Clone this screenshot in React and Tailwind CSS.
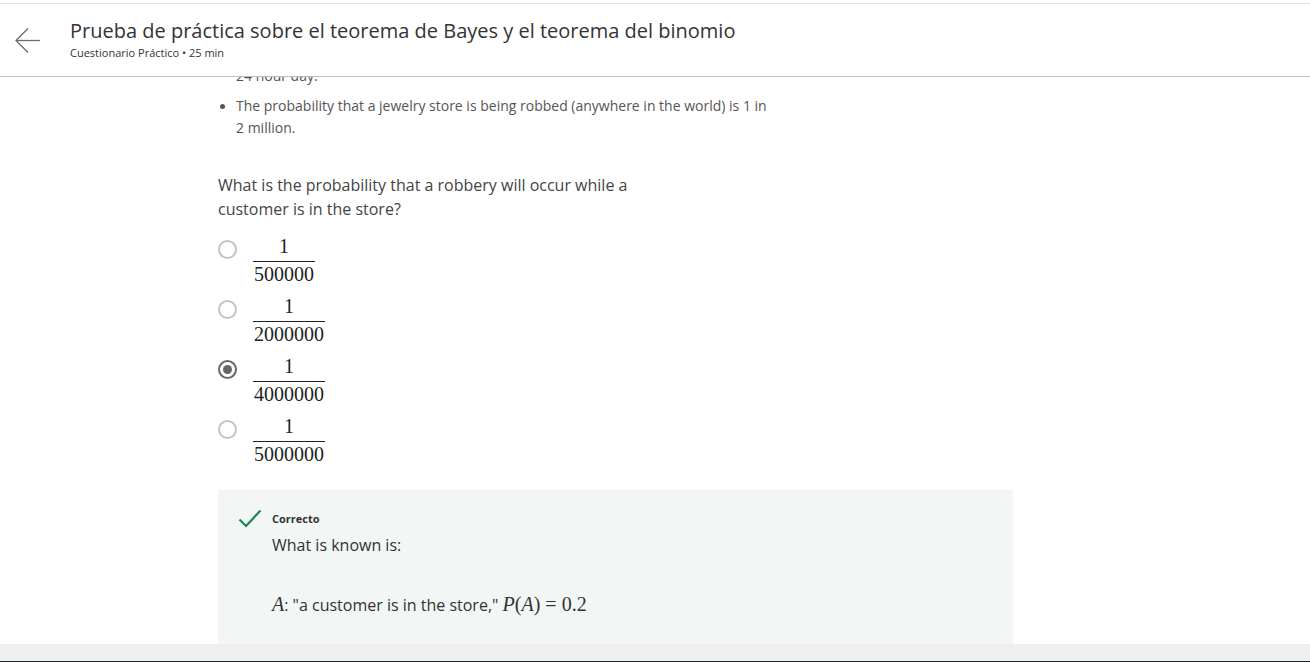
const options = [
  { den: "500000", checked: false },
  { den: "2000000", checked: false },
  { den: "4000000", checked: true },
  { den: "5000000", checked: false },
];

const serif = { fontFamily: '"Liberation Serif", "DejaVu Serif", serif' };

const Radio = ({ checked }) => (
  <div
    className={
      "mt-[4px] w-[19px] h-[19px] rounded-full border-2 flex items-center justify-center shrink-0 " +
      (checked ? "border-[#666]" : "border-[#c4c4c4]")
    }
  >
    {checked && <div className="w-[9px] h-[9px] rounded-full bg-[#666]" />}
  </div>
);

const Fraction = ({ num, den }) => (
  <div className="flex flex-col items-center text-[20px] text-[#222]" style={serif}>
    <div className="h-[20px] leading-[20px] px-[1px]">{num}</div>
    <div className="w-full mt-[5px] border-t-[1.5px] border-[#222]" />
    <div className="h-[20px] leading-[20px] px-[1px] mt-[2px]">{den}</div>
  </div>
);

export default function App() {
  return (
    <div
      className="w-[1310px] h-[662px] bg-white flex flex-col overflow-hidden"
      style={{ fontFamily: '"Open Sans", "Liberation Sans", sans-serif' }}
    >
      <div className="h-[3px] shrink-0" />
      {/* header */}
      <div className="h-[74px] shrink-0 border-t border-b border-t-[#e2e2e2] border-b-[#bdbdbd] flex items-start relative z-10 bg-white">
        <button className="ml-[14px] mt-[22px] w-[28px] h-[28px] flex items-center justify-center">
          <svg width="28" height="28" viewBox="0 0 28 28" fill="none" stroke="#6b6b6b" strokeWidth="1.3">
            <path d="M2 14.5 H26" />
            <path d="M14 2.5 L2 14.5 L14 26.5" />
          </svg>
        </button>
        <div className="ml-[28px] mt-[14px]">
          <h1 className="text-[20px] leading-[26px] text-[#333]">
            Prueba de práctica sobre el teorema de Bayes y el teorema del binomio
          </h1>
          <p className="text-[11px] leading-[16px] mt-[1px] text-[#333]">
            Cuestionario Práctico • 25 min
          </p>
        </div>
      </div>

      {/* scrolled content */}
      <div className="flex-1 overflow-hidden">
        <div className="ml-[218px] mt-[-12px]">
          <ul className="text-[14px] leading-[22px] text-[#555]">
            <li className="pl-[18px]">24 hour day.</li>
            <li className="mt-[8px] flex">
              <span className="w-[18px] shrink-0 flex pt-[9px] pl-[2px]">
                <span className="w-[5px] h-[5px] rounded-full bg-[#555]" />
              </span>
              <span className="whitespace-nowrap">
                The probability that a jewelry store is being robbed (anywhere in the world) is 1 in
                <br />2 million.
              </span>
            </li>
          </ul>

          <p className="mt-[34px] text-[16px] leading-[24px] text-[#444] whitespace-nowrap">
            What is the probability that a robbery will occur while a
            <br />
            customer is in the store?
          </p>

          <div className="mt-[15px] flex flex-col gap-[15px]">
            {options.map((o) => (
              <label key={o.den} className="flex items-start gap-[16px] h-[45px]">
                <Radio checked={o.checked} />
                <Fraction num="1" den={o.den} />
              </label>
            ))}
          </div>

          <div className="mt-[29px] w-[795px] h-[200px] bg-[#f2f7f5] pt-[20px] pl-[20px] flex gap-[10px]">
            <svg width="24" height="20" viewBox="0 0 24 20" fill="none" stroke="#1f8354" strokeWidth="2.2" className="mt-[-1px] shrink-0">
              <path d="M1.5 10.5 L8 17 L22.5 1.5" />
            </svg>
            <div>
              <p className="text-[11px] leading-[18px] font-bold text-[#333]">Correcto</p>
              <p className="mt-[5px] text-[16px] leading-[24px] text-[#333]">What is known is:</p>
              <p className="mt-[35px] text-[16px] leading-[24px] text-[#333]">
                <span className="italic text-[20px]" style={serif}>A</span>: "a customer is in the store,"{" "}
                <span className="text-[20px]" style={serif}>
                  <i>P</i>(<i>A</i>)<span className="mx-[5px]">=</span>0.2
                </span>
              </p>
            </div>
          </div>
        </div>
      </div>

      {/* bottom band */}
      <div className="h-[17px] shrink-0 bg-[#efefef]" />
      <div className="h-[1px] shrink-0 bg-[#1c2533]" />
    </div>
  );
}
